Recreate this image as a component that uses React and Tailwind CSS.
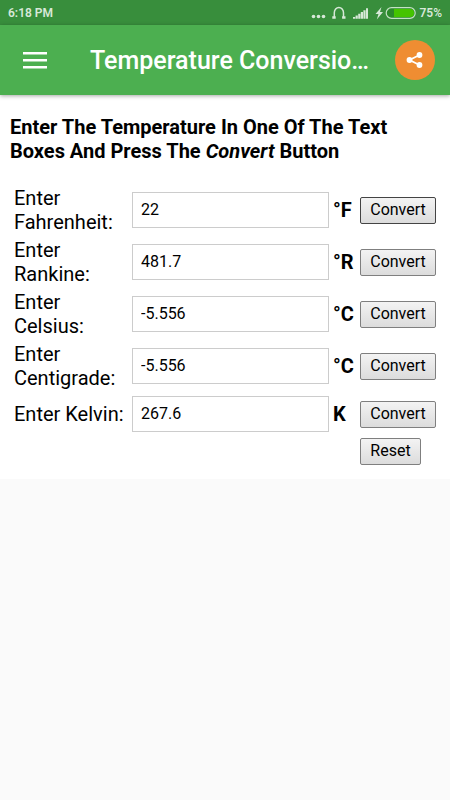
import { useState } from "react";

const fields = [
  { id: "fahrenheit", label: "Fahrenheit", unit: "°F" },
  { id: "rankine", label: "Rankine", unit: "°R" },
  { id: "celsius", label: "Celsius", unit: "°C" },
  { id: "centigrade", label: "Centigrade", unit: "°C" },
  { id: "kelvin", label: "Kelvin", unit: "K" },
];

const empty = { fahrenheit: "", rankine: "", celsius: "", centigrade: "", kelvin: "" };

const toCelsius = {
  fahrenheit: (v) => ((v - 32) * 5) / 9,
  rankine: (v) => ((v - 491.67) * 5) / 9,
  celsius: (v) => v,
  centigrade: (v) => v,
  kelvin: (v) => v - 273.15,
};

// four significant digits, no trailing zeros
const round = (v) => String(Number(v.toPrecision(4)));

function convert(id, value) {
  const c = toCelsius[id](parseFloat(value));
  if (Number.isNaN(c)) return empty;
  return {
    fahrenheit: round((c * 9) / 5 + 32),
    rankine: round(((c + 273.15) * 9) / 5),
    celsius: round(c),
    centigrade: round(c),
    kelvin: round(c + 273.15),
  };
}

const buttonClass =
  "h-[27px] border rounded-[2px] bg-linear-to-b from-[#f3f3f3] to-[#dcdcdc] pb-[2px] text-[16px] leading-6 text-black";

function StatusBar() {
  return (
    <div className="flex h-[25px] items-center justify-between bg-[#388e3c] px-2 text-[12px] font-semibold text-[#d7e8d8]">
      <span>6:18 PM</span>
      <div className="flex items-center gap-[3px]">
        <svg width="106" height="18" viewBox="0 0 106 18" fill="#d7e8d8">
          {/* notification dots */}
          <circle cx="3.5" cy="12.5" r="1.8" />
          <circle cx="8.5" cy="12.5" r="1.8" />
          <circle cx="13.5" cy="12.5" r="1.8" />
          {/* headphones */}
          <path d="M24.3 14V8.8a4.6 5.4 0 0 1 9.2 0V14" fill="none" stroke="#d7e8d8" strokeWidth="1.5" />
          <path d="M22.3 12.3h3.4v2.4h-3.4zM32.1 12.3h3.4v2.4h-3.4z" />
          {/* signal */}
          <path d="M43 13h2.2v1.7H43zM45.6 11.4h2.2v3.3h-2.2zM48.2 9.8h2.2v4.9h-2.2zM50.8 8h2.2v6.7h-2.2zM53.4 6.2h2.2v8.5h-2.2zM56 4.2h2v10.5h-2z" />
          {/* charging bolt */}
          <path d="M71.5 3l-6 7h3L66.8 15.5l6.2-7.5h-3z" />
          {/* battery */}
          <rect x="76.2" y="3.7" width="29" height="10.6" rx="5.3" fill="#2b8a2b" stroke="#c4e2c4" strokeWidth="1.2" />
          <path d="M84 5h16a4 4 0 0 1 0 8H84z" fill="#45c400" />
        </svg>
        <span>75%</span>
      </div>
    </div>
  );
}

function AppBar() {
  return (
    <header className="relative flex h-[70px] items-center bg-[#4caf50] pl-[23px] pr-[15px] shadow-[0_1px_4px_rgba(0,0,0,0.35)]">
      <button aria-label="Open menu">
        <svg width="24" height="18" viewBox="0 0 24 18" fill="#fff">
          <path d="M0 1h24v2.5H0zM0 8h24v2.5H0zM0 15h24v2.5H0z" />
        </svg>
      </button>
      <h1 className="ml-[43px] flex-1 pt-[2px] text-[25px] font-medium whitespace-nowrap text-white">
        Temperature Conversio…
      </h1>
      <button
        aria-label="Share"
        className="flex size-10 items-center justify-center rounded-full bg-[#ef8d32]"
      >
        <svg width="18" height="18" viewBox="0 0 18 18" fill="#fff">
          <path d="M13.5 4L3.5 9l10 5" fill="none" stroke="#fff" strokeWidth="1.8" />
          <circle cx="13.5" cy="4" r="2.9" />
          <circle cx="3.5" cy="9" r="2.9" />
          <circle cx="13.5" cy="14" r="2.9" />
        </svg>
      </button>
    </header>
  );
}

export default function App() {
  const [values, setValues] = useState(convert("fahrenheit", "22"));
  const [active, setActive] = useState("fahrenheit");

  const handleConvert = (id) => {
    setActive(id);
    setValues(convert(id, values[id]));
  };

  return (
    <div className="min-h-screen bg-[#fafafa] font-[Roboto,sans-serif] text-black">
      <StatusBar />
      <AppBar />
      <main className="bg-white pt-5 pb-[14px]">
        <h2 className="px-[10px] text-[20px] leading-6 font-bold">
          Enter The Temperature In One Of The Text Boxes And Press The <em>Convert</em> Button
        </h2>
        <form
          className="mt-[23px] flex flex-col gap-1 px-[14px]"
          onSubmit={(e) => e.preventDefault()}
        >
          {fields.map((f) => (
            <div
              key={f.id}
              className="grid min-h-10 grid-cols-[114px_1fr_23px_76px] items-center gap-x-1"
            >
              <label htmlFor={f.id} className="text-[20px] leading-6">
                Enter {f.label}:
              </label>
              <input
                id={f.id}
                type="text"
                className="h-9 w-full min-w-0 border border-[#cccccc] bg-white px-2 pb-[2px] text-[16px]"
                value={values[f.id]}
                onChange={(e) => setValues({ ...values, [f.id]: e.target.value })}
              />
              <span className="text-[20px] leading-6 font-bold">{f.unit}</span>
              <button
                type="button"
                className={`${buttonClass} ${active === f.id ? "border-[#444444]" : "border-[#7f7f7f]"}`}
                onClick={() => handleConvert(f.id)}
              >
                Convert
              </button>
            </div>
          ))}
          <div className="grid grid-cols-[1fr_76px]">
            <button
              type="button"
              className={`${buttonClass} col-start-2 w-[61px] border-[#7f7f7f]`}
              onClick={() => setValues(empty)}
            >
              Reset
            </button>
          </div>
        </form>
      </main>
    </div>
  );
}
